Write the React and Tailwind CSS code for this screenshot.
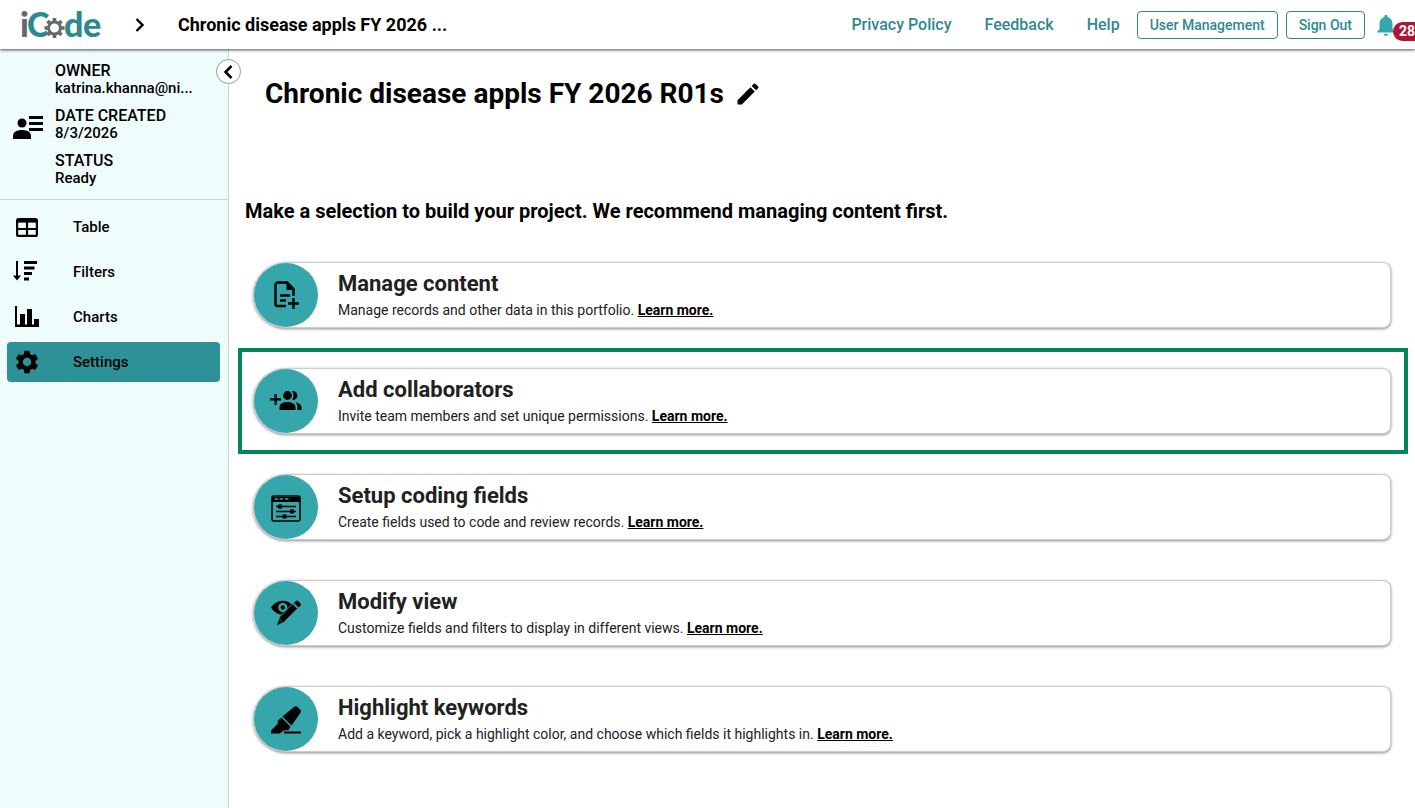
import React from 'react';
import { MdSettings, MdEdit, MdNotifications } from 'react-icons/md';

function Logo() {
  return (
    <svg width="90" height="48" viewBox="0 0 90 48" role="img" aria-label="iCode" fontFamily="Lato, sans-serif" fontWeight="900">
      <text x="0" y="36" fontSize="34" fill="#66666e">i</text>
      <text x="7" y="36" fontSize="34" fill="#2d898e">C</text>
      <text x="44" y="36" fontSize="34" fill="#2d898e">d</text>
      <text x="63" y="36" fontSize="34" fill="#2d898e">e</text>
      <circle cx="35" cy="27" r="9" fill="#fff" />
      <g stroke="#66666e" fill="none">
        <circle cx="34.500" cy="27" r="6" strokeWidth="3" />
        <path strokeWidth="3.600" d="M34.500 20v-3M34.500 34v3M27.500 27h-3M41.500 27h3M29.500 22l-2-2M39.500 22l2-2M29.500 32l-2 2M39.500 32l2 2" />
      </g>
    </svg>
  );
}

const OwnerIcon = () => (
  <svg className="mt-[6px]" width="30" height="24" viewBox="0 0 30 24" aria-hidden="true">
    <path d="M16 0h14v3H16zM16 6h14v3H16zM16 12h14v3H16z" />
    <circle cx="9" cy="7" r="4.500" />
    <path d="M0 23v-3c0-4 4-6 9-6s9 2 9 6v3z" />
  </svg>
);

const TableIcon = () => (
  <svg width="22" height="19" viewBox="0 0 22 19" fill="none" stroke="#000" strokeWidth="2.200" aria-hidden="true">
    <rect x="1.100" y="1.100" width="19.800" height="16.800" rx="1.500" />
    <path d="M1 2.500h20M1 11h20M11 4v14" />
    <path d="M1 3.500h20" />
  </svg>
);

const FiltersIcon = () => (
  <svg width="28" height="22" viewBox="0 0 28 22" aria-hidden="true">
    <path d="M11 0h13v3H11zM11 5.500h10.500v3H11zM11 11h8v3h-8zM11 16.500h5v3h-5zM3 0h2v14.500h3l-4 5-4-5h3z" />
  </svg>
);

const ChartsIcon = () => (
  <svg width="24" height="22" viewBox="0 0 24 22" aria-hidden="true">
    <path d="M0 0h2v18.500h3V8h5v10.500h2V3h5v15.500h2V13h5v8H0z" />
  </svg>
);

const SettingsIcon = () => <MdSettings size={28} aria-hidden="true" />;

const ContentIcon = () => (
  <svg width="28" height="28" viewBox="-3 0 28 28" fill="none" stroke="#000" strokeWidth="2.400" aria-hidden="true">
    <path d="M11 25H2.500a2 2 0 0 1-2-2V4a2.500 2.500 0 0 1 2.500-2.500h9l6.500 6.500v7" />
    <path d="M11.500 1v8H20z" fill="#000" stroke="none" />
    <path d="M5 14.500h10M5 19.500h6M18.500 17v11M13 22.500h11" />
  </svg>
);

const CollaboratorsIcon = () => (
  <svg width="32" height="20" viewBox="0 0 32 20" aria-hidden="true">
    <path d="M4.500 3h2.200v4.300H11v2.200H6.700V14H4.500V9.500H0V7.300h4.500z" />
    <circle cx="17.500" cy="4.500" r="4.400" />
    <path d="M9.500 19v-2.500c0-4 4-5.500 8-5.500s8 1.500 8 5.500V19zM22 .2a4.400 4.400 0 1 1 0 8.600c2-2.500 2-6.100 0-8.600zM25.500 11.300c3.500.7 6 2.400 6 5.200V19h-4v-2.500c0-2.100-.7-3.800-2-5.200z" />
  </svg>
);

const FieldsIcon = () => (
  <svg width="30" height="29" viewBox="0 -2 30 29" aria-hidden="true">
    <rect x="1" y="1" width="28" height="25" rx="2" fill="none" stroke="#000" strokeWidth="1.600" />
    <path d="M1 2h28v5H1z" />
    <path d="M3.500 4h3.500M8.500 4h3.500M14 4h3.500" stroke="#35a6ab" strokeWidth="1.500" />
    <path d="M5 11.500h20M5 16.500h20M5 21.500h20" stroke="#000" strokeWidth="1.600" />
    <path d="M7 9.500h4v4H7zM19 14.500h4v4h-4zM11.500 19.500h4v4h-4z" />
  </svg>
);

const ViewIcon = () => (
  <svg width="30" height="26" viewBox="0 0 30 26" aria-hidden="true">
    <path d="M0 7.500C3 3 7 .8 11.500.8c4 0 7 1.500 9.500 4L13 12.500l-3 2.200C6 14 2.500 11.500 0 7.500z" />
    <circle cx="11.800" cy="7.500" r="4.600" fill="#35a6ab" />
    <circle cx="11.800" cy="7.500" r="2.200" />
    <path d="M21.500 3.700L26.500 8.700 12.500 22.500l-6.500 3 2.500-8.500z" stroke="#35a6ab" strokeWidth=".8" />
    <path d="M8.500 19.500l2.500 2.500-5 3z" />
    <path d="M8.300 18.800l3 3" stroke="#35a6ab" strokeWidth=".8" />
    <path d="M23 3l2-2q1-.8 2 0l2.500 2.500q.8 1 0 2L27.500 7.500z" />
  </svg>
);

const HighlightIcon = () => (
  <svg width="30" height="30" viewBox="0 -2 30 30" aria-hidden="true">
    <path d="M11.500 10.500L23 1q2-1.500 3.500 0l2.500 2.500q1.500 1.800 0 4L20.500 19.500z" />
    <path d="M10.500 11.500l9 9-2 3.500-5 .5-3.500 3H0v-3l6.500-6.500.5-3.500z" />
    <path d="M13 25.500h17v2H13z" />
  </svg>
);

const details = [
  { label: 'OWNER', value: 'katrina.khanna@ni...' },
  { label: 'DATE CREATED', value: '8/3/2026' },
  { label: 'STATUS', value: 'Ready' },
];

const navItems = [
  { label: 'Table', icon: TableIcon },
  { label: 'Filters', icon: FiltersIcon },
  { label: 'Charts', icon: ChartsIcon },
  { label: 'Settings', icon: SettingsIcon, active: true },
];

const options = [
  { title: 'Manage content', text: 'Manage records and other data in this portfolio.', icon: ContentIcon },
  { title: 'Add collaborators', text: 'Invite team members and set unique permissions.', icon: CollaboratorsIcon, framed: true },
  { title: 'Setup coding fields', text: 'Create fields used to code and review records.', icon: FieldsIcon },
  { title: 'Modify view', text: 'Customize fields and filters to display in different views.', icon: ViewIcon },
  { title: 'Highlight keywords', text: 'Add a keyword, pick a highlight color, and choose which fields it highlights in.', icon: HighlightIcon },
];

function Header() {
  return (
    <header className="relative z-10 flex h-[49px] items-center overflow-x-clip bg-white pl-5 shadow-[0_1px_3px_rgba(0,0,0,0.7)]">
      <a href="#home"><Logo /></a>
      <svg className="ml-[25px]" width="9" height="14" viewBox="0 0 9 14" fill="none" stroke="#000" strokeWidth="2.400" aria-hidden="true">
        <path d="M1.500 1l6 6-6 6" />
      </svg>
      <span className="ml-[34px] text-lg font-bold">Chronic disease appls FY 2026 ...</span>
      <nav className="ml-auto flex shrink-0 items-center gap-[33px] text-base font-medium text-[#2d898e]">
        <a href="#privacy">Privacy Policy</a>
        <a href="#feedback">Feedback</a>
        <a href="#help">Help</a>
      </nav>
      <div className="ml-[17px] flex shrink-0 items-center gap-2 text-sm font-medium text-[#2d898e]">
        <button className="h-7 rounded border border-[#2d898e] px-3">User Management</button>
        <button className="h-7 rounded border border-[#2d898e] px-3">Sign Out</button>
      </div>
      <button className="relative ml-2 w-[42px] shrink-0 text-[#35a6ab]" aria-label="Notifications">
        <MdNotifications size={26} />
        <span className="absolute left-5 top-2.5 flex h-[19px] w-8 items-center rounded-full bg-[#b01433] pl-1.5 text-sm font-bold text-white">28</span>
      </button>
    </header>
  );
}

function Sidebar() {
  return (
    <aside className="relative w-[229px] shrink-0 border-r border-[#c9d6d6] bg-[#effcfc]">
      <button
        className="absolute -right-[13px] top-2.5 flex size-[25px] items-center justify-center rounded-full border border-[#999] bg-white"
        aria-label="Collapse sidebar"
      >
        <svg width="9" height="14" viewBox="0 0 9 14" fill="none" stroke="#000" strokeWidth="2.500" aria-hidden="true">
          <path d="M7.500 1l-6 6 6 6" />
        </svg>
      </button>
      <div className="flex items-center gap-3 border-b border-[#c9d6d6] pb-3 pl-[13px] pt-[13px]">
        <OwnerIcon />
        <dl className="flex flex-col gap-2.5 font-medium">
          {details.map((d) => (
            <div key={d.label}>
              <dt className="text-base leading-[18px]">{d.label}</dt>
              <dd className="text-[15px] leading-[17px]">{d.value}</dd>
            </div>
          ))}
        </dl>
      </div>
      <nav className="flex flex-col gap-[5px] pl-[7px] pr-2 pt-[7px]">
        {navItems.map(({ label, icon: Icon, active }) => (
          <a
            key={label}
            href={`#${label.toLowerCase()}`}
            className={`flex h-10 items-center rounded pl-1.5 text-[15px] font-medium ${active ? 'bg-[#2d9297]' : ''}`}
          >
            <span className="flex w-7 justify-center"><Icon /></span>
            <span className="ml-8">{label}</span>
          </a>
        ))}
      </nav>
    </aside>
  );
}

function OptionCard({ title, text, icon: Icon, framed }) {
  return (
    <li className={`border-4 py-4 pl-[11px] pr-[13px] ${framed ? 'border-[#05855a]' : 'border-transparent'}`}>
      <div className="flex h-[66px] items-center rounded-l-[33px] rounded-r-lg border border-[#ccc] bg-white shadow-[0_1px_3px_rgba(0,0,0,0.45)]">
        <div className="flex size-16 shrink-0 items-center justify-center rounded-full bg-[#35a6ab]">
          <Icon />
        </div>
        <div className="ml-5 pt-0.5">
          <h2 className="text-[22px] leading-7 font-bold text-[#212121]">{title}</h2>
          <p className="text-sm leading-6 text-[#212121]">
            {text}{' '}
            <a href="#learn" className="font-bold text-black underline">Learn more.</a>
          </p>
        </div>
      </div>
    </li>
  );
}

export default function App() {
  return (
    <div className="flex min-h-screen flex-col bg-white font-[Roboto,sans-serif] text-black">
      <Header />
      <div className="flex grow">
        <Sidebar />
        <main className="min-w-0 grow pl-[9px] pr-[7px]">
          <div className="flex items-center gap-2.5 pl-[27px] pt-[25px]">
            <h1 className="text-[28px] leading-10 font-bold">Chronic disease appls FY 2026 R01s</h1>
            <button aria-label="Edit name"><MdEdit size={28} /></button>
          </div>
          <p className="mt-[83px] pl-[7px] text-xl leading-7 font-bold">
            Make a selection to build your project. We recommend managing content first.
          </p>
          <ul className="mt-[17px]">
            {options.map((o) => <OptionCard key={o.title} {...o} />)}
          </ul>
        </main>
      </div>
    </div>
  );
}
